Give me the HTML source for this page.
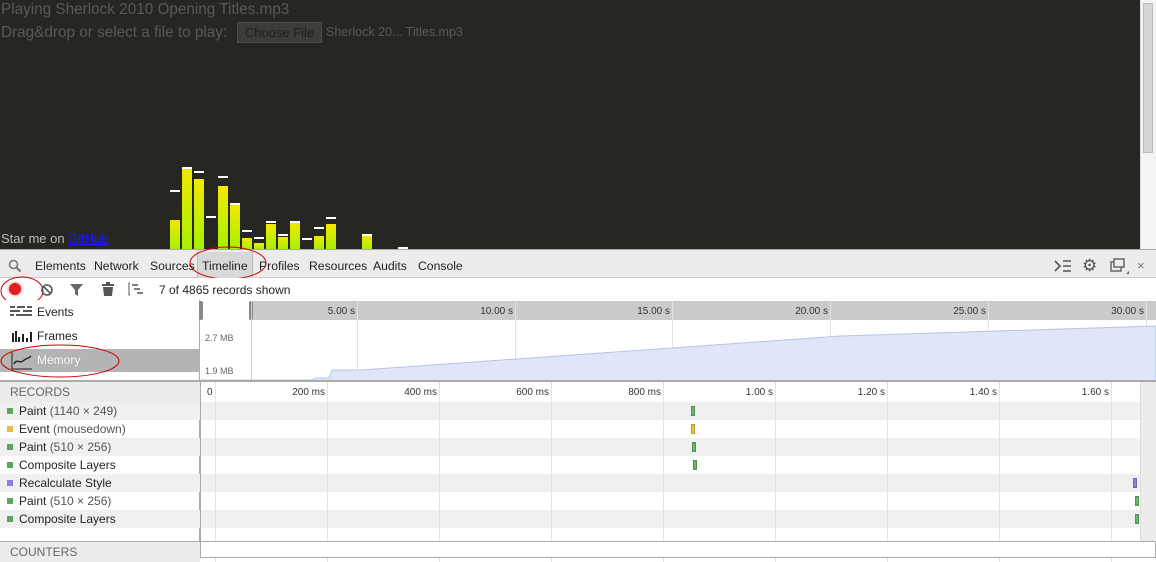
<!DOCTYPE html>
<html><head><meta charset="utf-8">
<style>
*{margin:0;padding:0;box-sizing:border-box}
body{width:1156px;height:562px;overflow:hidden;position:relative;background:#fff;font-family:"Liberation Sans",sans-serif;font-size:12px;color:#222}
.abs{position:absolute}
#page{left:0;top:0;width:1140px;height:249px;background:#262622;color:#5a5a55;font-size:15.3px}
.bar{position:absolute;width:10px;background:linear-gradient(#f2e800,#a8f000)}
.cap{position:absolute;width:10px;height:2px;background:#fff}
.tab{position:absolute;top:259px;font-size:12.2px;color:#222}
.lbl{position:absolute;font-size:10px;color:#333}
.row{position:absolute;left:0;width:1140px;height:18px}
.rl{position:absolute;left:7px;font-size:12px;color:#222;top:2px;white-space:nowrap}
.sq{display:inline-block;width:6px;height:6px;margin-right:6px;vertical-align:1px}
.mk{position:absolute;width:4px;height:10px;top:4px;border:1px solid rgba(0,0,0,.2)}
.vl{position:absolute;width:1px;background:#e2e2e2}
</style></head><body>
<div id="page" class="abs">
  <div class="abs" style="left:1px;top:1px">Playing Sherlock 2010 Opening Titles.mp3</div>
  <div class="abs" style="left:1px;top:24px">Drag&amp;drop or select a file to play:</div>
  <div class="abs" style="left:237px;top:22px;width:85px;height:21px;background:#3c3c38;border:1px solid #4c4c48;font-size:13px;color:#1e1e1c;text-align:center;line-height:19px">Choose File</div>
  <div class="abs" style="left:326px;top:25px;font-size:12.5px">Sherlock 20... Titles.mp3</div>
  <div class="abs" style="left:1px;top:231px;font-size:13px;color:#bdbdb8">Star me on <span style="color:#1a1aff;text-decoration:underline">GitHub</span></div>
</div>
<div class="abs" style="left:1140px;top:0;width:16px;height:249px;background:#f4f4f4;border-left:1px solid #ddd"></div>
<div class="abs" style="left:1143px;top:3px;width:10px;height:150px;background:#d6d6d6;border:1px solid #bbb"></div>

<div class="bar" style="left:170px;top:220px;height:29px"></div><div class="cap" style="left:170px;top:190px"></div>
<div class="bar" style="left:182px;top:168px;height:81px"></div><div class="cap" style="left:182px;top:167px"></div>
<div class="bar" style="left:194px;top:179px;height:70px"></div><div class="cap" style="left:194px;top:171px"></div>
<div class="cap" style="left:206px;top:216px"></div>
<div class="bar" style="left:218px;top:186px;height:63px"></div><div class="cap" style="left:218px;top:176px"></div>
<div class="bar" style="left:230px;top:205px;height:44px"></div><div class="cap" style="left:230px;top:203px"></div>
<div class="bar" style="left:242px;top:238px;height:11px"></div><div class="cap" style="left:242px;top:230px"></div>
<div class="bar" style="left:254px;top:243px;height:6px"></div><div class="cap" style="left:254px;top:237px"></div>
<div class="bar" style="left:266px;top:224px;height:25px"></div><div class="cap" style="left:266px;top:221px"></div>
<div class="bar" style="left:278px;top:237px;height:12px"></div><div class="cap" style="left:278px;top:234px"></div>
<div class="bar" style="left:290px;top:223px;height:26px"></div><div class="cap" style="left:290px;top:221px"></div>
<div class="cap" style="left:302px;top:238px"></div>
<div class="bar" style="left:314px;top:236px;height:13px"></div><div class="cap" style="left:314px;top:227px"></div>
<div class="bar" style="left:326px;top:224px;height:25px"></div><div class="cap" style="left:326px;top:217px"></div>
<div class="bar" style="left:362px;top:235px;height:14px"></div><div class="cap" style="left:362px;top:234px"></div>
<div class="cap" style="left:398px;top:247px"></div>

<div class="abs" style="left:0;top:249px;width:1156px;height:29px;background:#ececec;border-top:1px solid #aaa;border-bottom:1px solid #ccc"></div>
<svg class="abs" style="left:8px;top:259px" width="14" height="14"><circle cx="5.5" cy="5.5" r="4" fill="none" stroke="#777" stroke-width="1.6"/><line x1="8.5" y1="8.5" x2="12.5" y2="12.5" stroke="#777" stroke-width="2"/></svg>
<div class="abs" style="left:197px;top:252px;width:56px;height:26px;background:#d8d8d8;border-left:1px solid #bbb;border-right:1px solid #bbb"></div>
<div class="tab" style="left:35px">Elements</div>
<div class="tab" style="left:94px">Network</div>
<div class="tab" style="left:150px">Sources</div>
<div class="tab" style="left:202px">Timeline</div>
<div class="tab" style="left:259px">Profiles</div>
<div class="tab" style="left:309px">Resources</div>
<div class="tab" style="left:373px">Audits</div>
<div class="tab" style="left:418px">Console</div>
<svg class="abs" style="left:188px;top:244px" width="80" height="38"><ellipse cx="40" cy="19" rx="38" ry="16" fill="none" stroke="#c00" stroke-width="1"/></svg>
<svg class="abs" style="left:1054px;top:259px" width="20" height="14"><path d="M1 2l5 5-5 5" fill="none" stroke="#555" stroke-width="1.6"/><path d="M9 2h8M9 7h8M9 12h8" stroke="#555" stroke-width="1.6"/></svg>
<div class="abs" style="left:1082px;top:256px;font-size:17px;color:#555">&#9881;</div>
<svg class="abs" style="left:1110px;top:258px" width="20" height="18"><rect x="1" y="4" width="10" height="9" fill="none" stroke="#666" stroke-width="1.5"/><rect x="4" y="1" width="10" height="8" fill="#ececec" stroke="#666" stroke-width="1.5"/><path d="M16 16h3v-3z" fill="#666"/></svg>
<div class="abs" style="left:1137px;top:258px;font-size:13px;color:#777">×</div>

<div class="abs" style="left:0;top:278px;width:1156px;height:22px;background:#fff"></div>
<div class="abs" style="left:9px;top:283px;width:12px;height:12px;border-radius:50%;background:#e02020;box-shadow:0 0 3px #f55"></div>
<svg class="abs" style="left:0;top:274px" width="48" height="34"><ellipse cx="22" cy="17" rx="21" ry="14" fill="none" stroke="#c00" stroke-width="1"/></svg>
<svg class="abs" style="left:40px;top:283px" width="14" height="14"><circle cx="7" cy="7" r="5" fill="none" stroke="#555" stroke-width="1.6"/><line x1="3.5" y1="3.5" x2="10.5" y2="10.5" stroke="#555" stroke-width="1.6"/></svg>
<svg class="abs" style="left:69px;top:283px" width="16" height="14"><path d="M1 1h13l-5 6v6l-3-2v-4z" fill="#666"/></svg>
<svg class="abs" style="left:102px;top:282px" width="12" height="15"><rect x="0" y="2" width="12" height="2" fill="#555"/><rect x="4" y="0" width="4" height="2" fill="#555"/><path d="M1 5h10l-1 9H2z" fill="#555"/></svg>
<svg class="abs" style="left:128px;top:282px" width="20" height="14"><path d="M2 1H1v12h1" fill="none" stroke="#555"/><path d="M4 3h6M6 7h6M9 11h6" stroke="#555" stroke-width="1.6"/></svg>
<div class="abs" style="left:159px;top:283px;font-size:12px">7 of 4865 records shown</div>

<div class="abs" style="left:0;top:300px;width:200px;height:81px;background:#fff;border-right:1px solid #aaa"></div>
<div class="abs" style="left:0;top:349px;width:200px;height:23px;background:#b4b4b4"></div>
<svg class="abs" style="left:10px;top:305px" width="22" height="12"><path d="M0 2h5M7 2h8M17 2h5M0 6h10M13 6h9M0 10h4M6 10h16" stroke="#222" stroke-width="1.6"/></svg>
<div class="abs" style="left:37px;top:305px">Events</div>
<svg class="abs" style="left:12px;top:328px" width="22" height="15"><path d="M1 14V5M4 14V3M7 14V9M11 14V6M15 14V10M19 14V4" stroke="#222" stroke-width="2"/></svg>
<div class="abs" style="left:37px;top:329px">Frames</div>
<svg class="abs" style="left:11px;top:352px" width="22" height="18"><path d="M1 0v17h20" fill="none" stroke="#222"/><path d="M3 12c3-6 6 0 9-3s5-2 8-5" fill="none" stroke="#222" stroke-width="1.4"/></svg>
<div class="abs" style="left:37px;top:353px;color:#fff;text-shadow:0 0 1px #999">Memory</div>
<svg class="abs" style="left:0;top:342px" width="130" height="38"><ellipse cx="60" cy="19" rx="59" ry="16" fill="none" stroke="#c00" stroke-width="1"/></svg>
<div class="abs" style="left:201px;top:300px;width:955px;height:81px;background:#fff"></div>
<div class="abs" style="left:250px;top:301px;width:906px;height:19px;background:#cbcbcb"></div>
<div class="abs" style="left:199px;top:301px;width:4px;height:19px;background:#888;border-radius:2px"></div>
<div class="abs" style="left:249px;top:301px;width:4px;height:19px;background:#888;border-radius:2px"></div>
<div class="vl" style="left:251px;top:301px;height:80px;background:#ccc"></div>
<div class="vl" style="left:357px;top:301px;height:80px"></div>
<div class="vl" style="left:515px;top:301px;height:80px"></div>
<div class="vl" style="left:672px;top:301px;height:80px"></div>
<div class="vl" style="left:830px;top:301px;height:80px"></div>
<div class="vl" style="left:988px;top:301px;height:80px"></div>
<div class="vl" style="left:1146px;top:301px;height:80px"></div>
<div class="lbl" style="left:320px;top:306px;width:35px;text-align:right">5.00 s</div>
<div class="lbl" style="left:470px;top:306px;width:43px;text-align:right">10.00 s</div>
<div class="lbl" style="left:627px;top:306px;width:43px;text-align:right">15.00 s</div>
<div class="lbl" style="left:785px;top:306px;width:43px;text-align:right">20.00 s</div>
<div class="lbl" style="left:943px;top:306px;width:43px;text-align:right">25.00 s</div>
<div class="lbl" style="left:1101px;top:306px;width:43px;text-align:right">30.00 s</div>
<div class="lbl" style="left:205px;top:333px;font-size:9px;color:#666">2.7 MB</div>
<div class="lbl" style="left:205px;top:366px;font-size:9px;color:#666">1.9 MB</div>
<svg class="abs" style="left:201px;top:320px" width="955" height="61"><path d="M0 61V60H110L115 58H128L131 50H160L640 16L955 6V61Z" fill="#dfe6fa" stroke="#b8c4e4" stroke-width="1"/></svg>
<div class="abs" style="left:0;top:380px;width:1156px;height:2px;background:#aaa"></div>

<div class="abs" style="left:0;top:382px;width:200px;height:180px;background:#fff;border-right:1px solid #aaa"></div>
<div class="abs" style="left:0;top:382px;width:200px;height:20px;background:#ececec"></div>
<div class="abs" style="left:10px;top:385px;color:#666">RECORDS</div>
<div class="row" style="top:402px;background:#f0f0f0"></div>
<div class="row" style="top:438px;background:#f0f0f0"></div>
<div class="row" style="top:474px;background:#f0f0f0"></div>
<div class="row" style="top:510px;background:#f0f0f0"></div>
<div class="abs" style="left:200px;top:382px;width:1px;height:160px;background:#aaa"></div>
<div class="vl" style="left:215px;top:382px;height:180px"></div>
<div class="vl" style="left:327px;top:382px;height:180px"></div>
<div class="vl" style="left:439px;top:382px;height:180px"></div>
<div class="vl" style="left:551px;top:382px;height:180px"></div>
<div class="vl" style="left:663px;top:382px;height:180px"></div>
<div class="vl" style="left:775px;top:382px;height:180px"></div>
<div class="vl" style="left:887px;top:382px;height:180px"></div>
<div class="vl" style="left:999px;top:382px;height:180px"></div>
<div class="vl" style="left:1111px;top:382px;height:180px"></div>
<div class="lbl" style="left:207px;top:387px">0</div>
<div class="lbl" style="left:280px;top:387px;width:45px;text-align:right">200 ms</div>
<div class="lbl" style="left:392px;top:387px;width:45px;text-align:right">400 ms</div>
<div class="lbl" style="left:504px;top:387px;width:45px;text-align:right">600 ms</div>
<div class="lbl" style="left:616px;top:387px;width:45px;text-align:right">800 ms</div>
<div class="lbl" style="left:728px;top:387px;width:45px;text-align:right">1.00 s</div>
<div class="lbl" style="left:840px;top:387px;width:45px;text-align:right">1.20 s</div>
<div class="lbl" style="left:952px;top:387px;width:45px;text-align:right">1.40 s</div>
<div class="lbl" style="left:1064px;top:387px;width:45px;text-align:right">1.60 s</div>
<div class="row" style="top:402px"><div class="rl"><span class="sq" style="background:#5ea65e"></span>Paint <span style="color:#555">(1140 × 249)</span></div><div class="mk" style="left:691px;background:#6ab36a"></div></div>
<div class="row" style="top:420px"><div class="rl"><span class="sq" style="background:#f0b840"></span>Event <span style="color:#555">(mousedown)</span></div><div class="mk" style="left:691px;background:#f2c04a"></div></div>
<div class="row" style="top:438px"><div class="rl"><span class="sq" style="background:#5ea65e"></span>Paint <span style="color:#555">(510 × 256)</span></div><div class="mk" style="left:692px;background:#6ab36a"></div></div>
<div class="row" style="top:456px"><div class="rl"><span class="sq" style="background:#5ea65e"></span>Composite Layers</div><div class="mk" style="left:693px;background:#6ab36a"></div></div>
<div class="row" style="top:474px"><div class="rl"><span class="sq" style="background:#8e80dd"></span>Recalculate Style</div><div class="mk" style="left:1133px;background:#8e80dd"></div></div>
<div class="row" style="top:492px"><div class="rl"><span class="sq" style="background:#5ea65e"></span>Paint <span style="color:#555">(510 × 256)</span></div><div class="mk" style="left:1135px;background:#6ab36a"></div></div>
<div class="row" style="top:510px"><div class="rl"><span class="sq" style="background:#5ea65e"></span>Composite Layers</div><div class="mk" style="left:1135px;background:#6ab36a"></div></div>
<div class="abs" style="left:1140px;top:382px;width:16px;height:160px;background:#ececec;border-left:1px solid #ddd"></div>
<div class="abs" style="left:0;top:541px;width:1156px;height:1px;background:#aaa"></div>
<div class="abs" style="left:0;top:542px;width:200px;height:20px;background:#ececec"></div>
<div class="abs" style="left:10px;top:545px;color:#666">COUNTERS</div>
<div class="abs" style="left:200px;top:542px;width:956px;height:16px;background:#fff;border:1px solid #aaa;border-top:none"></div>
</body></html>
